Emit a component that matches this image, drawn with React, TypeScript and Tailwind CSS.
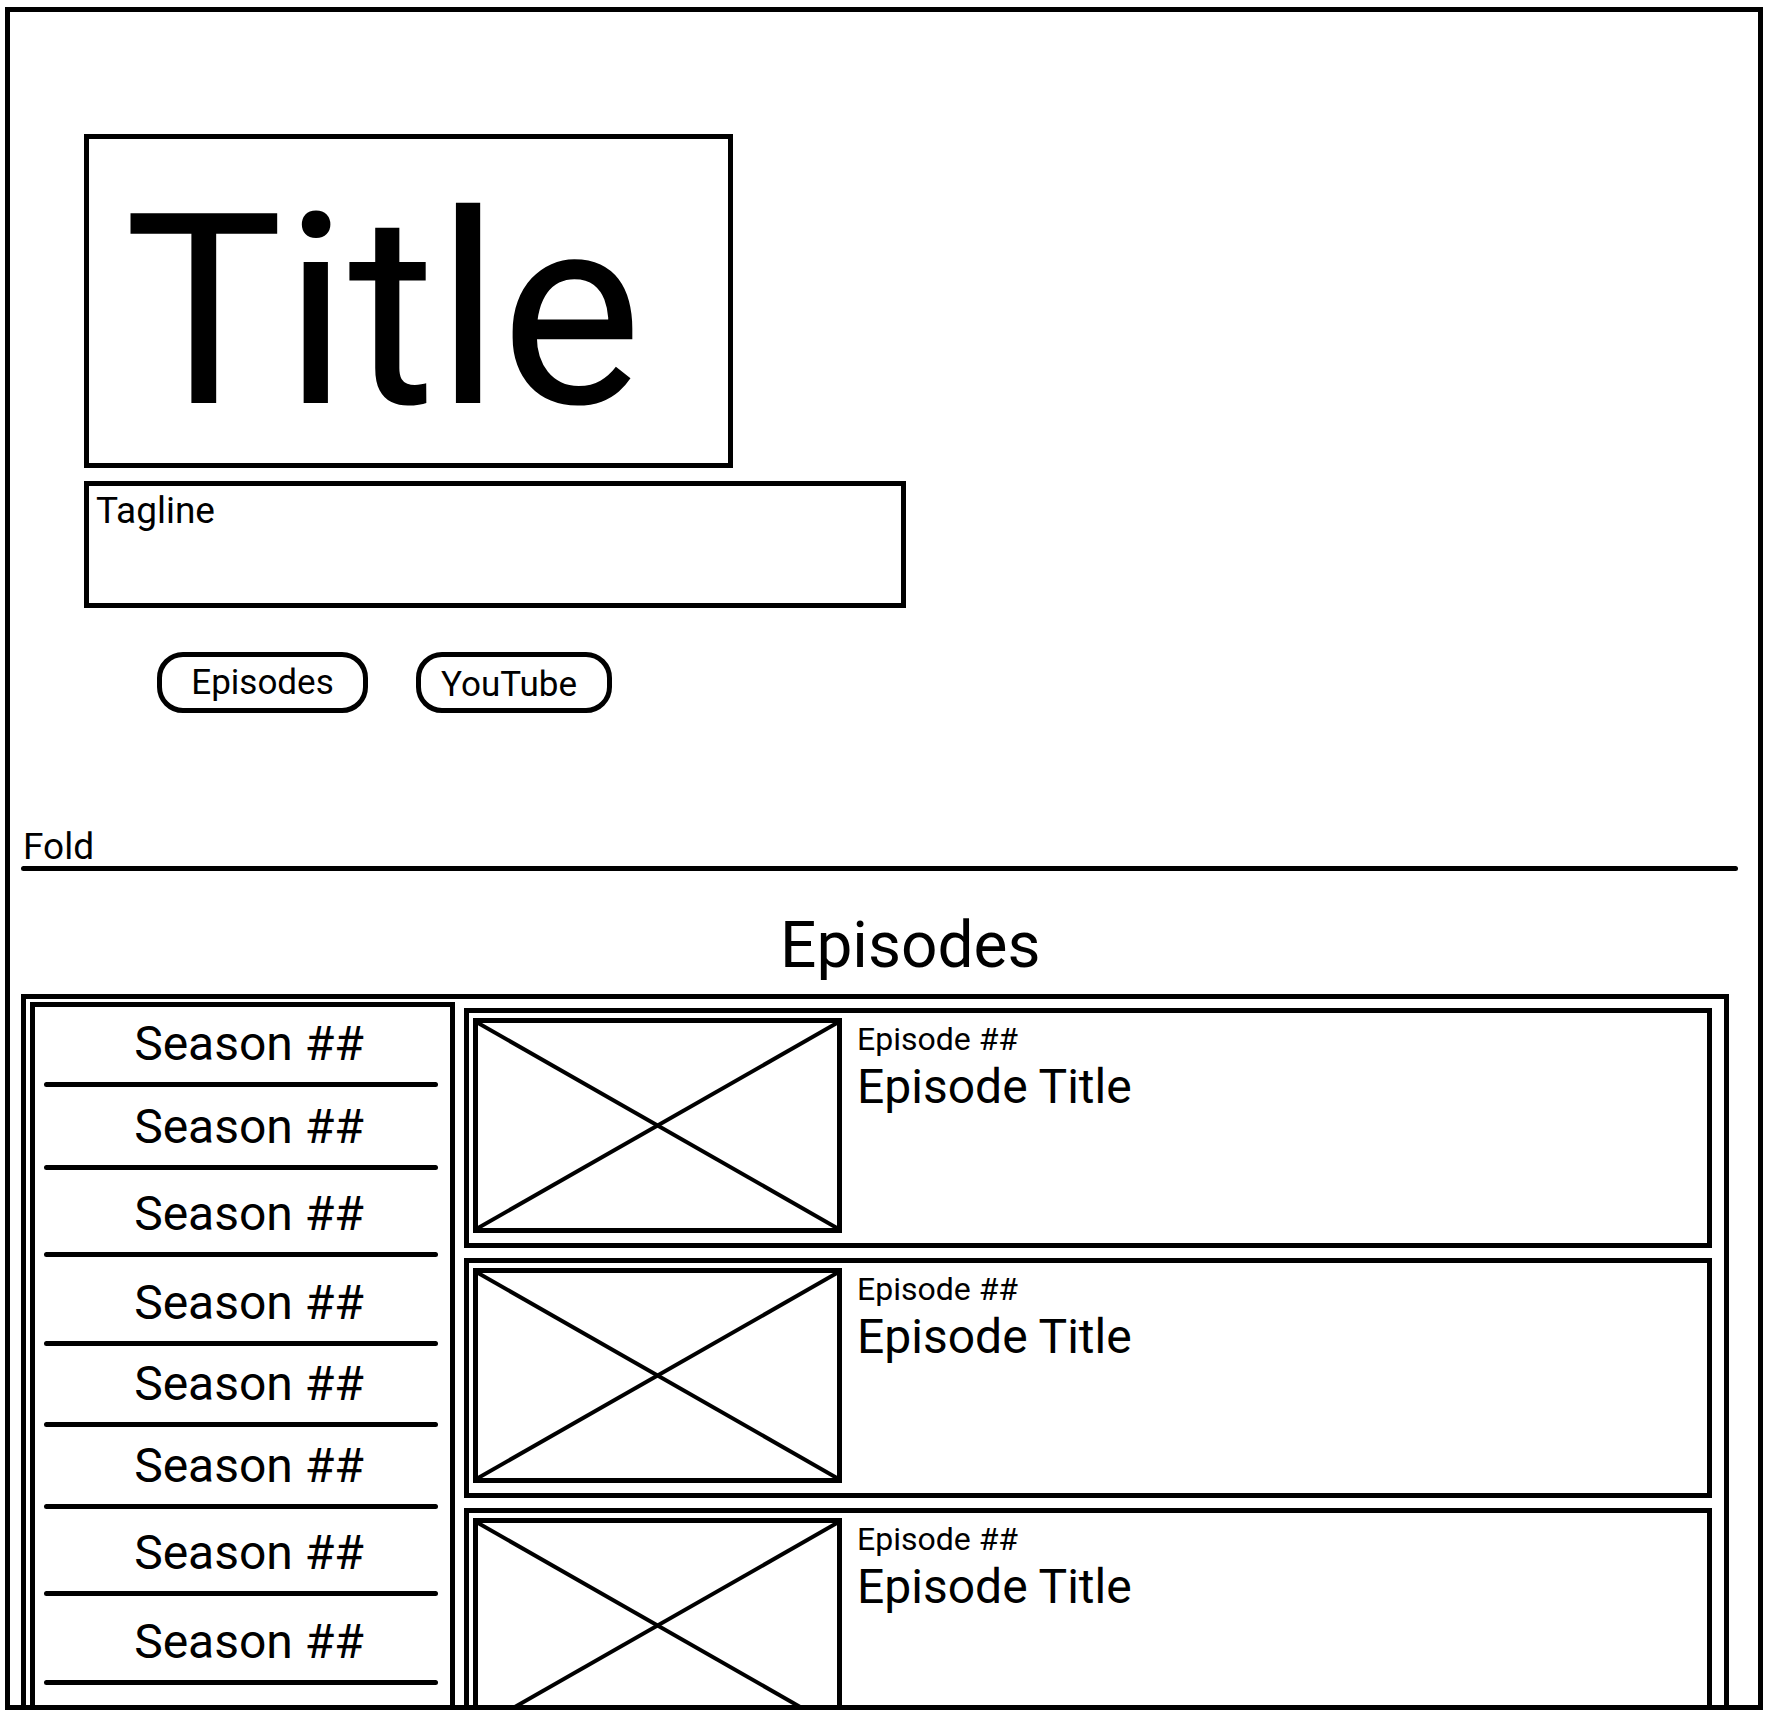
import React from "react";

const seasonRows = [80, 83, 87, 89, 81, 82, 87, 89];

function Thumb() {
  return (
    <div className="relative ml-[4px] mt-[5px] h-[215px] w-[369px] shrink-0 border-[5px] border-black">
      <svg className="absolute inset-0 h-full w-full" viewBox="0 0 100 100" preserveAspectRatio="none">
        <line x1="0" y1="0" x2="100" y2="100" stroke="black" strokeWidth="4" vectorEffect="non-scaling-stroke" />
        <line x1="100" y1="0" x2="0" y2="100" stroke="black" strokeWidth="4" vectorEffect="non-scaling-stroke" />
      </svg>
    </div>
  );
}

function EpisodeCard() {
  return (
    <div className="flex h-[240px] w-[1248px] shrink-0 border-[5px] border-black">
      <Thumb />
      <div className="ml-[15px] flex flex-col pt-[10px]">
        <div className="text-[32px] leading-none">Episode ##</div>
        <div className="mt-[8px] text-[48px] leading-none">Episode Title</div>
      </div>
    </div>
  );
}

export default function App() {
  return (
    <div className="bg-white font-[Roboto] text-black">
      <div className="ml-[5px] mt-[7px] flex h-[1703px] w-[1758px] flex-col overflow-hidden border-[5px] border-black">
        {/* Title */}
        <div className="ml-[74px] mt-[122px] h-[334px] w-[649px] shrink-0 border-[5px] border-black pl-[35px] pt-[39px]">
          <div className="text-[267px] leading-none">Title</div>
        </div>
        {/* Tagline */}
        <div className="ml-[74px] mt-[13px] h-[127px] w-[822px] shrink-0 border-[5px] border-black pl-[7px] pt-[6px]">
          <div className="text-[37px] leading-none">Tagline</div>
        </div>
        {/* Buttons */}
        <div className="ml-[147px] mt-[44px] flex shrink-0 gap-[48px]">
          <div className="flex h-[61px] w-[211px] items-center justify-center rounded-[26px] border-[5px] border-black text-[35px] leading-none">
            Episodes
          </div>
          <div className="flex h-[61px] w-[196px] items-center justify-center rounded-[26px] border-[5px] border-black pr-[10px] pt-[4px] text-[35px] leading-none">
            YouTube
          </div>
        </div>
        {/* Fold */}
        <div className="ml-[13px] mt-[115px] shrink-0 text-[37px] leading-none">Fold</div>
        <div className="ml-[11px] mt-[1px] h-[5px] w-[1717px] shrink-0 rounded-full bg-black" />
        {/* Episodes heading */}
        <div className="mt-[43px] shrink-0 pl-[770px] text-[64px] leading-none">Episodes</div>
        {/* Container */}
        <div className="ml-[11px] mt-[16px] flex h-[780px] w-[1708px] shrink-0 border-x-[5px] border-t-[5px] border-black">
          {/* Seasons */}
          <div className="ml-[4px] mt-[3px] flex h-[780px] w-[425px] shrink-0 flex-col border-x-[5px] border-t-[5px] border-black">
            {seasonRows.map((h, i) => (
              <div key={i} className="flex shrink-0 flex-col justify-end" style={{ height: h }}>
                <div className="pl-[13px] text-center text-[48px] leading-none">Season ##</div>
                <div className="ml-[9px] mr-[12px] mt-[14px] h-[5px] rounded-full bg-black" />
              </div>
            ))}
          </div>
          {/* Episodes list */}
          <div className="ml-[9px] mt-[9px] flex flex-col gap-[10px]">
            <EpisodeCard />
            <EpisodeCard />
            <EpisodeCard />
          </div>
        </div>
      </div>
    </div>
  );
}
